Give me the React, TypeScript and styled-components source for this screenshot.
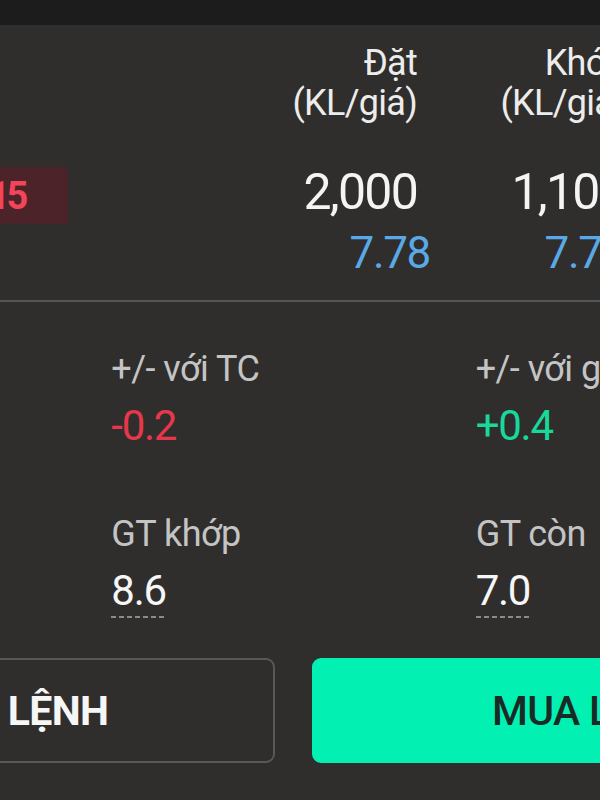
import styled, { createGlobalStyle } from 'styled-components'

const GlobalStyle = createGlobalStyle`
  html, body {
    margin: 0;
    padding: 0;
    background: #2f2e2d;
    font-family: Roboto, "Noto Sans", "Liberation Sans", sans-serif;
    overflow: hidden;
  }
`

const Viewport = styled.div`
  width: 600px;
  height: 800px;
  overflow: hidden;
  background: #2f2e2d;
`

const TopBar = styled.div`
  height: 25px;
  background: #1c1c1c;
`

const Canvas = styled.main`
  width: 1153px;
  margin-left: -283px;
  box-sizing: border-box;
`

const OrderTable = styled.section`
  padding: 18px 37px 0 30px;
  border-bottom: 2px solid #565656;
`

const TableRow = styled.div<{ $gap?: number }>`
  display: grid;
  grid-template-columns: 1fr repeat(3, 208px);
  margin-top: ${p => p.$gap ?? 0}px;
`

const HeadCell = styled.div`
  text-align: right;
  color: #ececec;
  font-size: 36px;
  line-height: 40px;
  letter-spacing: -0.02em;
  white-space: nowrap;
`

const SymbolCell = styled.div`
  display: flex;
  align-items: flex-start;
  padding-left: 216px;
`

const Badge = styled.span`
  box-sizing: border-box;
  width: 105px;
  height: 57px;
  padding-right: 43px;
  display: flex;
  align-items: center;
  justify-content: flex-end;
  background: #4b2328;
  border-radius: 4px;
  color: #f2445a;
  font-weight: 700;
  font-size: 38px;
  letter-spacing: -0.09em;
`

const DataCell = styled.div`
  display: flex;
  flex-direction: column;
  align-items: flex-end;
  padding-bottom: 25px;
`

const Volume = styled.span`
  color: #f4f4f4;
  font-size: 50px;
  line-height: 50px;
  letter-spacing: -0.035em;
`

const Price = styled.span<{ $nudge?: number }>`
  margin-top: 14px;
  margin-right: ${p => -(p.$nudge ?? 0)}px;
  color: #5aa9e6;
  font-size: 44px;
  line-height: 44px;
  letter-spacing: -0.03em;
`

const Stats = styled.section`
  display: grid;
  grid-template-columns: repeat(3, 1fr);
  row-gap: 66px;
  padding: 47px 30px 0;
`

const Stat = styled.div`
  display: flex;
  flex-direction: column;
  align-items: flex-start;
`

const StatLabel = styled.span`
  color: #c4c4c4;
  font-size: 36px;
  line-height: 40px;
  letter-spacing: -0.015em;
  margin-bottom: 15px;
  white-space: nowrap;
`

const StatValue = styled.span<{ $tone?: 'up' | 'down' | 'plain'; $dotted?: boolean }>`
  color: ${p => (p.$tone === 'up' ? '#19d89b' : p.$tone === 'down' ? '#e6384a' : '#f6f6f6')};
  font-size: 42px;
  line-height: 44px;
  letter-spacing: -0.03em;
  padding-bottom: ${p => (p.$dotted ? 5 : 0)}px;
  background: ${p =>
    p.$dotted
      ? 'repeating-linear-gradient(90deg, #8a8a8a 0 5px, transparent 5px 8px) left bottom / 100% 2px no-repeat'
      : 'none'};
`

const Actions = styled.section`
  display: grid;
  grid-template-columns: 1fr 1fr;
  gap: 37px;
  margin-top: 40px;
`

const ActionButton = styled.button<{ $primary?: boolean }>`
  height: 105px;
  border-radius: 9px;
  border: 2px solid ${p => (p.$primary ? '#02f1b2' : '#585858')};
  background: ${p => (p.$primary ? '#02f1b2' : 'transparent')};
  color: ${p => (p.$primary ? '#1a2a24' : '#f6f6f6')};
  font-family: Roboto, "Noto Sans", sans-serif;
  font-size: 41px;
  font-weight: ${p => (p.$primary ? 500 : 700)};
  letter-spacing: -0.015em;
  white-space: nowrap;
  padding: 0 0 0 ${p => (p.$primary ? 0 : 35)}px;
  cursor: pointer;
`

const stats = [
  { label: 'Giá khớp', value: '7.6', tone: 'plain' as const },
  { label: '+/- với TC', value: '-0.2', tone: 'down' as const },
  { label: '+/- với giá đặt', value: '+0.4', tone: 'up' as const },
  { label: 'KL khớp', value: '1,100', tone: 'plain' as const },
  { label: 'GT khớp', value: '8.6', tone: 'plain' as const, dotted: true },
  { label: 'GT còn', value: '7.0', tone: 'plain' as const, dotted: true },
]

export default function App() {
  return (
    <>
      <GlobalStyle />
      <Viewport>
        <TopBar />
        <Canvas>
          <OrderTable>
            <TableRow>
              <HeadCell />
              <HeadCell>
                Đặt
                <br />
                (KL/giá)
              </HeadCell>
              <HeadCell>
                Khớp
                <br />
                (KL/giá)
              </HeadCell>
              <HeadCell>
                Còn
                <br />
                (KL/giá)
              </HeadCell>
            </TableRow>
            <TableRow $gap={44}>
              <SymbolCell>
                <Badge>7.15</Badge>
              </SymbolCell>
              <DataCell>
                <Volume>2,000</Volume>
                <Price $nudge={13}>7.78</Price>
              </DataCell>
              <DataCell>
                <Volume>1,100</Volume>
                <Price>7.78</Price>
              </DataCell>
              <DataCell>
                <Volume>900</Volume>
                <Price>7.78</Price>
              </DataCell>
            </TableRow>
          </OrderTable>

          <Stats>
            {stats.map(s => (
              <Stat key={s.label}>
                <StatLabel>{s.label}</StatLabel>
                <StatValue $tone={s.tone} $dotted={s.dotted}>
                  {s.value}
                </StatValue>
              </Stat>
            ))}
          </Stats>

          <Actions>
            <ActionButton>HỦY LỆNH</ActionButton>
            <ActionButton $primary>MUA LỆNH</ActionButton>
          </Actions>
        </Canvas>
      </Viewport>
    </>
  )
}
